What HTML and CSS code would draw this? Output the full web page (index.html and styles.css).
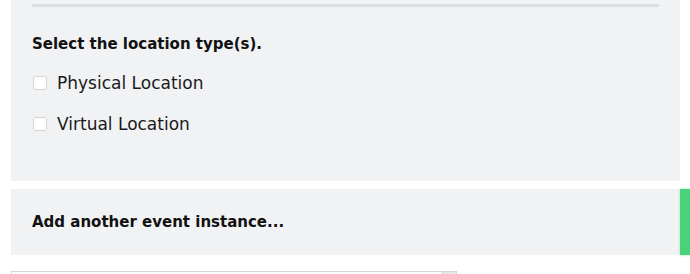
FILE: index.html
```html
<!DOCTYPE html>
<html>
<head>
<meta charset="utf-8">
<link rel="stylesheet" href="styles.css">
</head>
<body>
<div class="page">
  <section class="panel location">
    <div class="divider"></div>
    <h3 class="title">Select the location type(s).</h3>
    <label class="option"><span class="box"></span><span>Physical Location</span></label>
    <label class="option"><span class="box"></span><span>Virtual Location</span></label>
  </section>
  <div class="row">
    <section class="panel add">
      <h3 class="title">Add another event instance...</h3>
    </section>
    <div class="tab"></div>
  </div>
  <div class="field"><div class="field-end"></div></div>
</div>
</body>
</html>
```
FILE: styles.css
```css
html, body { margin: 0; padding: 0; background: #fff; }
body { font-family: "DejaVu Sans", sans-serif; color: #111; overflow: hidden; height: 274px; }
.page { padding-left: 11px; width: 679px; }
.panel { background: #f1f2f4; width: 669px; box-sizing: border-box; padding: 0 21px; }
.location { height: 181px; padding-top: 4px; }
.divider { height: 3px; width: 627px; background: #dcdde0; }
.title { margin: 0; font-size: 15px; font-weight: bold; letter-spacing: 0; }
.location .title { margin-top: 27px; line-height: 20px; }
.option { display: flex; align-items: center; gap: 10px; font-size: 17px; margin-top: 19px; height: 20px; color: #1a1a1a; }
.option + .option { margin-top: 21px; }
.box { width: 12px; height: 12px; border: 1px solid #d3d4d6; border-radius: 3px; background: #fff; margin-left: 1px; }
.row { display: flex; margin-top: 8px; height: 66px; }
.add { height: 66px; display: flex; align-items: center; }
.tab { width: 10px; background: #4ad27a; box-shadow: 0 0 3px #8fe6ac; }
.field { margin-top: 16px; width: 444px; height: 10px; border: 1px solid #d6d6d6; border-bottom: none; position: relative; }
.field-end { position: absolute; right: 0; top: 0; width: 15px; height: 10px; background: #e6e6e6; }
```
